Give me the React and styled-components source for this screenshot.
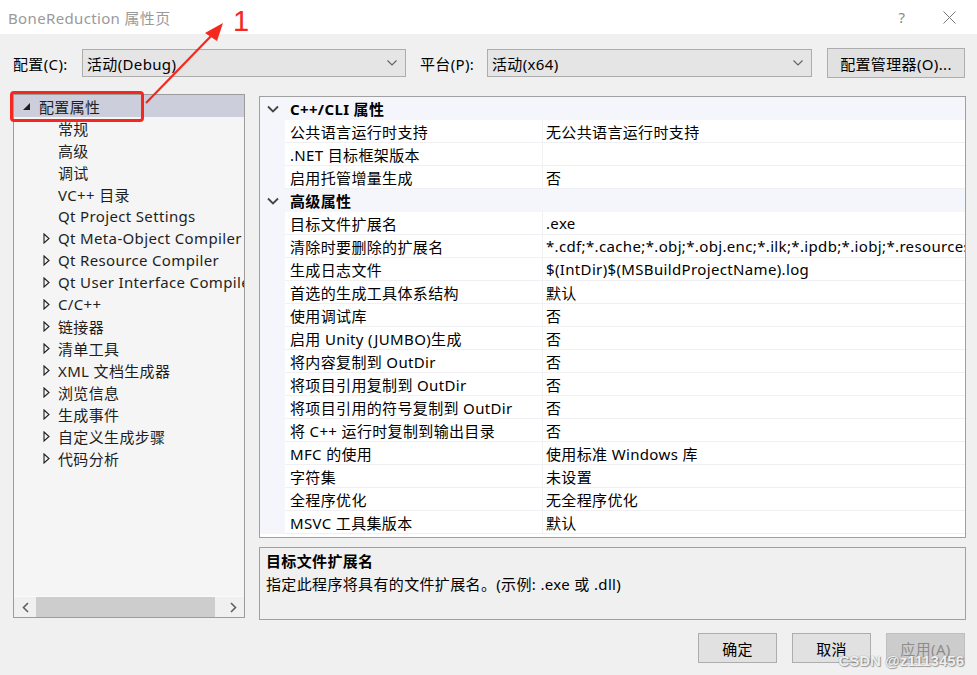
import React from "react";
import styled, { createGlobalStyle } from "styled-components";

const FONT = `"Noto Sans", "Noto Sans CJK SC", sans-serif`;

const GlobalStyle = createGlobalStyle`
  html, body { margin: 0; padding: 0; background: #f0f0f0; }
  body { font-family: ${FONT}; font-size: 15px; color: #000; letter-spacing: 0.35px; }
  * { box-sizing: border-box; }
`;

const Window = styled.div`
  position: relative;
  width: 977px;
  height: 675px;
  background: #f0f0f0;
  display: flex;
  flex-direction: column;
  overflow: hidden;
`;

const TitleBar = styled.div`
  height: 34px;
  background: #fff;
  display: flex;
  align-items: center;
  padding-left: 8px;
  flex-shrink: 0;
`;

const Title = styled.div`
  color: #9a9a9a;
  font-size: 15px;
  flex: 1;
`;

const TitleBtn = styled.div`
  width: ${(p) => p.$w}px;
  height: 34px;
  display: flex;
  align-items: center;
  justify-content: center;
  color: #8a8a8a;
  font-size: 15px;
`;

const Toolbar = styled.div`
  margin-top: 14px;
  height: 30px;
  display: flex;
  align-items: center;
  padding-left: 13px;
`;

const Label = styled.div`
  width: ${(p) => p.$w}px;
  font-size: 15px;
  white-space: nowrap;
`;

const Combo = styled.div`
  width: ${(p) => p.$w}px;
  height: 28px;
  background: #e5e5e5;
  border: 1px solid #adadad;
  display: flex;
  align-items: center;
  padding: 0 8px 0 4px;
  margin-right: ${(p) => p.$mr}px;
`;

const ComboText = styled.div`
  flex: 1;
`;

const Button = styled.button`
  font-family: ${FONT};
  font-size: 15px;
  letter-spacing: 0.35px;
  width: ${(p) => p.$w}px;
  height: 30px;
  background: ${(p) => (p.disabled ? "#cccccc" : "#e1e1e1")};
  border: 1px solid ${(p) => (p.disabled ? "#bfbfbf" : "#adadad")};
  color: ${(p) => (p.disabled ? "#8c8c8c" : "#000")};
  padding: 0;
  margin: 0;
`;

const Main = styled.div`
  margin-top: 16px;
  height: 526px;
  display: flex;
  padding-left: 13px;
  gap: 14px;
`;

const Tree = styled.div`
  width: 232px;
  height: 524px;
  border: 1px solid #9c9c9c;
  background: #f5f5f5;
  display: flex;
  flex-direction: column;
`;

const TreeList = styled.div`
  flex: 1;
  overflow: hidden;
`;

const TreeRow = styled.div`
  height: 22px;
  display: flex;
  align-items: center;
  white-space: nowrap;
  padding-left: ${(p) => (p.$level === 0 ? 8 : 29)}px;
  background: ${(p) => (p.$selected ? "#cccedb" : "transparent")};
  color: #1e1e1e;
`;

const Expander = styled.div`
  width: ${(p) => (p.$level === 0 ? 17 : 15)}px;
  height: 22px;
  display: flex;
  align-items: center;
  flex-shrink: 0;
`;

const HScroll = styled.div`
  height: 21px;
  display: flex;
  align-items: center;
  background: #f0f0f0;
  border-top: 1px solid #fafafa;
`;

const ScrollArrow = styled.div`
  width: 22px;
  height: 20px;
  display: flex;
  align-items: center;
  justify-content: center;
`;

const ScrollTrack = styled.div`
  flex: 1;
  height: 20px;
  display: flex;
  align-items: stretch;
`;

const ScrollThumb = styled.div`
  width: 179px;
  background: #cdcdcd;
`;

const RightCol = styled.div`
  width: 707px;
  display: flex;
  flex-direction: column;
  padding-top: 2px;
  gap: 9px;
`;

const Grid = styled.div`
  height: 442px;
  border: 1px solid #a0a0a0;
  background: #fff;
  display: flex;
  flex-direction: column;
  overflow: hidden;
`;

const GroupHeader = styled.div`
  height: 23px;
  background: #f4f6fb;
  display: flex;
  align-items: center;
  font-weight: 700;
  white-space: nowrap;
`;

const Gutter = styled.div`
  width: 25px;
  align-self: stretch;
  display: flex;
  align-items: center;
  justify-content: center;
  background: #f4f6fb;
  flex-shrink: 0;
`;

const HeaderText = styled.div`
  padding-left: 5px;
`;

const PropRow = styled.div`
  height: 23px;
  display: flex;
  white-space: nowrap;
`;

const NameCell = styled.div`
  width: 258px;
  padding-left: 5px;
  display: flex;
  align-items: center;
  border-bottom: 1px solid #f0f0f4;
  border-right: 1px solid #f0f0f4;
  flex-shrink: 0;
`;

const ValueCell = styled.div`
  flex: 1;
  padding-left: 3px;
  display: flex;
  align-items: center;
  border-bottom: 1px solid #f0f0f4;
  overflow: hidden;
`;

const Desc = styled.div`
  height: 73px;
  border: 1px solid #a0a0a0;
  background: #f0f0f0;
  padding: 2px 6px;
`;

const DescTitle = styled.div`
  font-weight: 700;
  height: 23px;
  line-height: 23px;
`;

const DescText = styled.div`
  height: 23px;
  line-height: 23px;
`;

const Footer = styled.div`
  margin-top: 13px;
  display: flex;
  justify-content: flex-end;
  gap: 15px;
  padding-right: 12px;
`;

const RedBox = styled.div`
  position: absolute;
  left: 10px;
  top: 91px;
  width: 134px;
  height: 31px;
  border: 3px solid #f5271e;
  border-radius: 4px;
`;

const ArrowSvg = styled.svg`
  position: absolute;
  left: 0;
  top: 0;
  pointer-events: none;
`;

const AnnotNum = styled.div`
  position: absolute;
  left: 233px;
  top: 4px;
  color: #f5271e;
  font-family: "Liberation Sans", sans-serif;
  font-size: 29px;
  line-height: 34px;
`;

const Watermark = styled.div`
  position: absolute;
  right: 13px;
  bottom: 6px;
  font-family: "Liberation Sans", sans-serif;
  font-size: 15px;
  font-weight: 700;
  color: rgba(255, 255, 255, 0.9);
  text-shadow: 0 0 1px #777, 1px 1px 1px rgba(0, 0, 0, 0.35);
  letter-spacing: 0;
`;

const Chevron = ({ color = "#606060" }) => (
  <svg width="10" height="6" viewBox="0 0 10 6">
    <path d="M0.5 0.5 L5 5 L9.5 0.5" fill="none" stroke={color} strokeWidth="1.1" />
  </svg>
);

const GroupChevron = () => (
  <svg width="12" height="8" viewBox="0 0 12 8">
    <path d="M1 1.5 L6 6.5 L11 1.5" fill="none" stroke="#444" strokeWidth="1.8" />
  </svg>
);

const TriFilled = () => (
  <svg width="9" height="9" viewBox="0 0 9 9">
    <path d="M8 1 L8 8 L1 8 Z" fill="#1e1e1e" />
  </svg>
);

const TriOutline = () => (
  <svg width="7" height="11" viewBox="0 0 7 11">
    <path d="M1 1 L6 5.5 L1 10 Z" fill="none" stroke="#1e1e1e" strokeWidth="1.1" />
  </svg>
);

const treeItems = [
  { label: "配置属性", level: 0, exp: "open", selected: true },
  { label: "常规", level: 1 },
  { label: "高级", level: 1 },
  { label: "调试", level: 1 },
  { label: "VC++ 目录", level: 1 },
  { label: "Qt Project Settings", level: 1 },
  { label: "Qt Meta-Object Compiler", level: 1, exp: "closed" },
  { label: "Qt Resource Compiler", level: 1, exp: "closed" },
  { label: "Qt User Interface Compiler", level: 1, exp: "closed" },
  { label: "C/C++", level: 1, exp: "closed" },
  { label: "链接器", level: 1, exp: "closed" },
  { label: "清单工具", level: 1, exp: "closed" },
  { label: "XML 文档生成器", level: 1, exp: "closed" },
  { label: "浏览信息", level: 1, exp: "closed" },
  { label: "生成事件", level: 1, exp: "closed" },
  { label: "自定义生成步骤", level: 1, exp: "closed" },
  { label: "代码分析", level: 1, exp: "closed" },
];

const groups = [
  {
    title: "C++/CLI 属性",
    rows: [
      ["公共语言运行时支持", "无公共语言运行时支持"],
      [".NET 目标框架版本", ""],
      ["启用托管增量生成", "否"],
    ],
  },
  {
    title: "高级属性",
    rows: [
      ["目标文件扩展名", ".exe"],
      ["清除时要删除的扩展名", "*.cdf;*.cache;*.obj;*.obj.enc;*.ilk;*.ipdb;*.iobj;*.resources;*.tlb;*.tli;*.tlh;*.tmp"],
      ["生成日志文件", "$(IntDir)$(MSBuildProjectName).log"],
      ["首选的生成工具体系结构", "默认"],
      ["使用调试库", "否"],
      ["启用 Unity (JUMBO)生成", "否"],
      ["将内容复制到 OutDir", "否"],
      ["将项目引用复制到 OutDir", "否"],
      ["将项目引用的符号复制到 OutDir", "否"],
      ["将 C++ 运行时复制到输出目录", "否"],
      ["MFC 的使用", "使用标准 Windows 库"],
      ["字符集", "未设置"],
      ["全程序优化", "无全程序优化"],
      ["MSVC 工具集版本", "默认"],
    ],
  },
];

export default function App() {
  return (
    <>
      <GlobalStyle />
      <Window>
        <TitleBar>
          <Title>BoneReduction 属性页</Title>
          <TitleBtn $w={38}>?</TitleBtn>
          <TitleBtn $w={56}>
            <svg width="13" height="13" viewBox="0 0 13 13">
              <path d="M0.5 0.5 L12.5 12.5 M12.5 0.5 L0.5 12.5" stroke="#777" strokeWidth="1" />
            </svg>
          </TitleBtn>
        </TitleBar>

        <Toolbar>
          <Label $w={69}>配置(C):</Label>
          <Combo $w={324} $mr={14}>
            <ComboText>活动(Debug)</ComboText>
            <Chevron />
          </Combo>
          <Label $w={67}>平台(P):</Label>
          <Combo $w={325} $mr={15}>
            <ComboText>活动(x64)</ComboText>
            <Chevron />
          </Combo>
          <Button $w={138}>配置管理器(O)...</Button>
        </Toolbar>

        <Main>
          <Tree>
            <TreeList>
              {treeItems.map((it) => (
                <TreeRow key={it.label} $level={it.level} $selected={it.selected}>
                  <Expander $level={it.level}>
                    {it.exp === "open" && <TriFilled />}
                    {it.exp === "closed" && <TriOutline />}
                  </Expander>
                  {it.label}
                </TreeRow>
              ))}
            </TreeList>
            <HScroll>
              <ScrollArrow>
                <svg width="7" height="11" viewBox="0 0 7 11">
                  <path d="M6 1 L1.5 5.5 L6 10" fill="none" stroke="#606060" strokeWidth="1.6" />
                </svg>
              </ScrollArrow>
              <ScrollTrack>
                <ScrollThumb />
              </ScrollTrack>
              <ScrollArrow>
                <svg width="7" height="11" viewBox="0 0 7 11">
                  <path d="M1 1 L5.5 5.5 L1 10" fill="none" stroke="#606060" strokeWidth="1.6" />
                </svg>
              </ScrollArrow>
            </HScroll>
          </Tree>

          <RightCol>
            <Grid>
              {groups.map((g) => (
                <React.Fragment key={g.title}>
                  <GroupHeader>
                    <Gutter>
                      <GroupChevron />
                    </Gutter>
                    <HeaderText>{g.title}</HeaderText>
                  </GroupHeader>
                  {g.rows.map(([n, v]) => (
                    <PropRow key={n}>
                      <Gutter />
                      <NameCell>{n}</NameCell>
                      <ValueCell>{v}</ValueCell>
                    </PropRow>
                  ))}
                </React.Fragment>
              ))}
            </Grid>
            <Desc>
              <DescTitle>目标文件扩展名</DescTitle>
              <DescText>指定此程序将具有的文件扩展名。(示例: .exe 或 .dll)</DescText>
            </Desc>
          </RightCol>
        </Main>

        <Footer>
          <Button $w={79}>确定</Button>
          <Button $w={79}>取消</Button>
          <Button $w={79} disabled>应用(A)</Button>
        </Footer>

        <RedBox />
        <ArrowSvg width="260" height="130" viewBox="0 0 260 130">
          <path d="M146 103 L214 33" stroke="#f5271e" strokeWidth="2.2" fill="none" />
          <path d="M223 23 L205 33 L217 41 Z" fill="#f5271e" />
        </ArrowSvg>
        <AnnotNum>1</AnnotNum>
        <Watermark>CSDN @z1113456</Watermark>
      </Window>
    </>
  );
}
